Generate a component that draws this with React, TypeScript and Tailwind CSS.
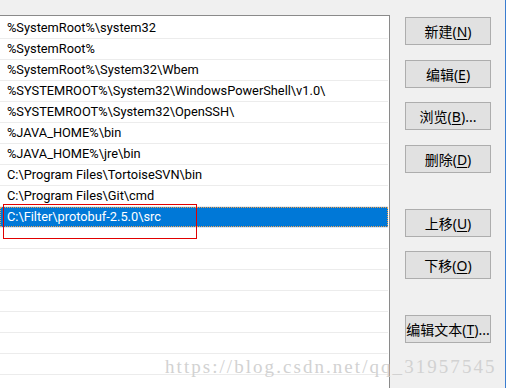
import type { ReactNode } from 'react';

const paths = [
  '%SystemRoot%\\system32',
  '%SystemRoot%',
  '%SystemRoot%\\System32\\Wbem',
  '%SYSTEMROOT%\\System32\\WindowsPowerShell\\v1.0\\',
  '%SYSTEMROOT%\\System32\\OpenSSH\\',
  '%JAVA_HOME%\\bin',
  '%JAVA_HOME%\\jre\\bin',
  'C:\\Program Files\\TortoiseSVN\\bin',
  'C:\\Program Files\\Git\\cmd',
  'C:\\Filter\\protobuf-2.5.0\\src',
  '',
  '',
  '',
  '',
  '',
  '',
  '',
];

const SELECTED = 9;

function WinButton({ label, mn, tail = '', className = '' }: { label: string; mn: string; tail?: string; className?: string }) {
  return (
    <button
      type="button"
      className={`flex h-[28px] w-[86px] items-center justify-center border border-[#adadad] bg-[#e1e1e1] text-[14px] text-black ${className}`}
    >
      <span>
        {label}(<span className="underline underline-offset-2">{mn}</span>){tail}
      </span>
    </button>
  );
}

function Row({ text, selected }: { text: string; selected: boolean }): ReactNode {
  if (selected) {
    return (
      <div className="h-[21px] border-b border-[#d8e8f8]">
        <div className="flex h-[20px] items-center border border-dotted border-[#f0a050] bg-[#0078d7] pt-[1px] pl-[6px] text-white">
          {text}
        </div>
      </div>
    );
  }
  return (
    <div className="flex h-[21px] items-center border-b border-[#ececec] pt-[1px] pl-[7px] text-black">
      {text}
    </div>
  );
}

export default function App() {
  return (
    <div
      className="relative flex h-[388px] w-[506px] overflow-hidden border-r border-[#3a7dd0] bg-[#f0f0f0]"
      style={{ fontFamily: 'Roboto, "Noto Sans CJK SC", sans-serif' }}
    >
      {/* path list */}
      <div className="mt-[15px] h-[400px] w-[390px] shrink-0 border-t border-r border-[#8a8a8a] bg-white pt-[2px] pr-[1px] text-[12.8px] leading-none">
        {paths.map((p, i) => (
          <Row key={i} text={p} selected={i === SELECTED} />
        ))}
      </div>

      {/* buttons */}
      <div className="ml-[15px] flex flex-col pt-[17px]" style={{ fontFamily: '"Noto Sans", "Noto Sans CJK SC", sans-serif' }}>
        <WinButton label="新建" mn="N" />
        <WinButton label="编辑" mn="E" className="mt-[15px]" />
        <WinButton label="浏览" mn="B" tail="..." className="mt-[14px]" />
        <WinButton label="删除" mn="D" className="mt-[15px]" />
        <WinButton label="上移" mn="U" className="mt-[36px]" />
        <WinButton label="下移" mn="O" className="mt-[14px]" />
        <WinButton label="编辑文本" mn="T" tail="..." className="mt-[36px]" />
      </div>

      {/* red annotation box */}
      <div className="absolute top-[204px] left-[3px] h-[35px] w-[194px] border border-[#e00000]" />

      {/* watermark */}
      <div
        className="absolute top-[357px] left-[165px] text-[19px] leading-none tracking-[2.05px] whitespace-nowrap text-[#d2d2d2]"
        style={{ fontFamily: '"Liberation Serif", serif' }}
      >
        https://blog.csdn.net/qq_31957545
      </div>
    </div>
  );
}
